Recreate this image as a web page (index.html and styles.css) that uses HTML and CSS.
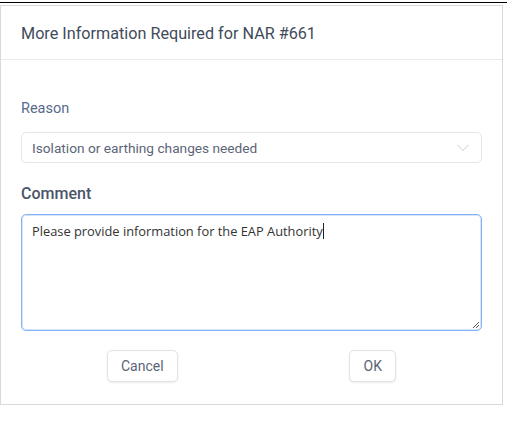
FILE: index.html
```html
<!DOCTYPE html>
<html>
<head>
<meta charset="utf-8">
<link rel="stylesheet" href="styles.css">
</head>
<body>
<div class="topline"></div>
<div class="modal">
  <div class="modal-header">More Information Required for NAR #661</div>
  <div class="modal-body">
    <div class="label reason-label">Reason</div>
    <div class="select">
      <span class="select-text">Isolation or earthing changes needed</span>
      <svg class="chevron" width="12" height="8" viewBox="0 0 12 8"><path d="M0.5 0.8 L6 6.5 L11.5 0.8" fill="none" stroke="#c9ced6" stroke-width="1"/></svg>
    </div>
    <div class="label comment-label">Comment</div>
    <div class="textarea">
      <span class="ta-text">Please provide information for the EAP Authority</span><span class="caret"></span>
      <svg class="grip" width="9" height="9" viewBox="0 0 9 9"><path d="M8 2 L2 8 M8 5 L5 8" stroke="#555" stroke-width="1"/></svg>
    </div>
    <div class="actions">
      <button class="btn btn-cancel">Cancel</button>
      <button class="btn btn-ok">OK</button>
    </div>
  </div>
</div>
</body>
</html>
```
FILE: styles.css
```css
html, body { margin: 0; padding: 0; background: #fff; }
body { font-family: Roboto, "Liberation Sans", sans-serif; width: 507px; height: 421px; overflow: hidden; }
.topline { height: 1px; background: #000; margin-top: 2px; }
.modal {
  margin-top: 2px;
  width: 501px;
  height: 398px;
  border: 1px solid #d9d9d9;
  box-sizing: content-box;
}
.modal-header {
  height: 54px;
  box-sizing: border-box;
  border-bottom: 1px solid #e8eaed;
  padding: 0 20px;
  display: flex;
  align-items: center;
  padding-top: 1px;
  font-size: 16.2px;
  color: #3f4b5b;
}
.modal-body { padding: 0 20px; }
.label { color: #566a8a; font-size: 14.5px; }
.reason-label { margin-top: 41px; line-height: 16px; }
.select {
  margin-top: 15px;
  height: 31px;
  box-sizing: border-box;
  border: 1px solid #e3e6ea;
  border-radius: 5px;
  display: flex;
  align-items: center;
  justify-content: space-between;
  padding: 0 12px 0 10px;
}
.select-text { font-size: 13.7px; color: #5b6577; }
.chevron { display: block; }
.comment-label { margin-top: 22px; line-height: 18px; font-size: 16px; font-weight: 500; color: #4a5568; }
.textarea {
  margin-top: 11px;
  height: 117px;
  box-sizing: border-box;
  border: 1px solid #85b3f5;
  border-radius: 5px;
  box-shadow: 0 0 0 1px #d3e4fb inset;
  position: relative;
  padding: 7px 10px 5px;
  font-family: "Open Sans", "Noto Sans", sans-serif;
  font-size: 12.85px;
  color: #333;
}
.caret { display: inline-block; width: 1px; height: 16px; background: #222; vertical-align: -3px; }
.grip { position: absolute; right: 1px; bottom: 1px; }
.actions { display: flex; justify-content: space-around; margin-top: 19px; }
.btn {
  height: 32px;
  background: #fff;
  border: 1px solid #dfe2e6;
  border-radius: 5px;
  box-shadow: 0 1px 2px rgba(0,0,0,0.08);
  font-family: Roboto, "Liberation Sans", sans-serif;
  font-size: 14px;
  color: #5a6478;
}
.btn-cancel { width: 71px; }
.btn-ok { width: 47px; }
```
